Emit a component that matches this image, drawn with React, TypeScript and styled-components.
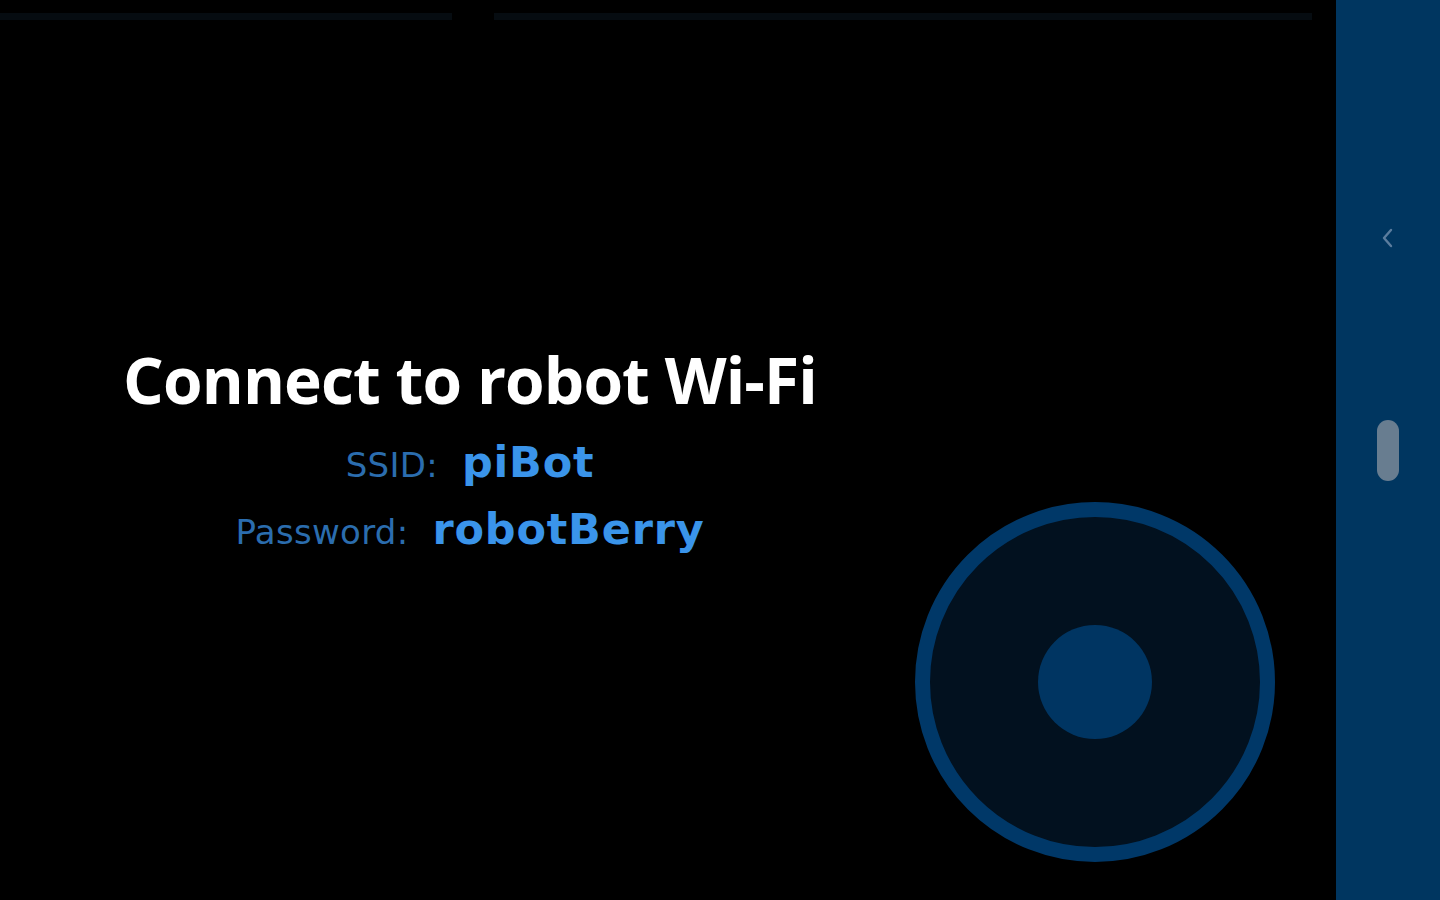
import styled, { createGlobalStyle } from "styled-components";

const GlobalStyle = createGlobalStyle`
  html, body {
    margin: 0;
    padding: 0;
    background: #000;
  }
  body {
    font-family: "Open Sans", "Noto Sans", sans-serif;
  }
`;

const Screen = styled.div`
  display: flex;
  width: 1440px;
  height: 900px;
  overflow: hidden;
  background: #000;
`;

const Main = styled.div`
  flex: 1;
  display: flex;
  flex-direction: column;
`;

const TopBars = styled.div`
  display: flex;
  gap: 42px;
  padding: 13px 24px 0 0;
`;

const TopBar = styled.div<{ $width: number }>`
  width: ${(p) => p.$width}px;
  height: 7px;
  background: #060c11;
`;

const Stage = styled.div`
  flex: 1;
  display: flex;
`;

const Info = styled.div`
  width: 890px;
  padding: 320px 0 0 25px;
  display: flex;
  flex-direction: column;
  align-items: center;
  text-align: center;
`;

const Title = styled.h1`
  margin: 0 0 10px;
  color: #fff;
  font-size: 64px;
  font-weight: 700;
  line-height: 80px;
  letter-spacing: -0.9px;
`;

const Row = styled.div`
  display: flex;
  align-items: baseline;
  gap: 24px;
  line-height: 64px;
  font-family: "DejaVu Sans", "Open Sans", sans-serif;
`;

const Label = styled.span`
  color: #2b6dae;
  font-size: 34px;
  font-weight: 400;
  letter-spacing: 0.3px;
`;

const Value = styled.span`
  color: #3a94ea;
  font-size: 43px;
  font-weight: 700;
  letter-spacing: 0.8px;
`;

const JoystickArea = styled.div`
  flex: 1;
  display: flex;
  justify-content: flex-end;
  align-items: flex-end;
  padding: 0 61px 38px 0;
`;

const JoystickRing = styled.div`
  width: 360px;
  height: 360px;
  box-sizing: border-box;
  border-radius: 50%;
  border: 15px solid #003868;
  background: #02111f;
  display: flex;
  align-items: center;
  justify-content: center;
`;

const Knob = styled.div`
  width: 114px;
  height: 114px;
  border-radius: 50%;
  background: #003562;
`;

const Sidebar = styled.div`
  width: 104px;
  background: #003660;
  display: flex;
  flex-direction: column;
  align-items: center;
  padding-top: 226px;
  box-sizing: border-box;
`;

const Chevron = styled.svg`
  width: 16px;
  height: 24px;
  margin-right: 2px;
`;

const ScrollPill = styled.div`
  width: 22px;
  height: 61px;
  margin-top: 170px;
  border-radius: 11px;
  background: #687d90;
`;

export default function App() {
  return (
    <>
      <GlobalStyle />
      <Screen>
        <Main>
          <TopBars>
            <TopBar $width={452} />
            <TopBar $width={818} />
          </TopBars>
          <Stage>
            <Info>
              <Title>Connect to robot Wi-Fi</Title>
              <Row>
                <Label>SSID:</Label>
                <Value>piBot</Value>
              </Row>
              <Row>
                <Label>Password:</Label>
                <Value>robotBerry</Value>
              </Row>
            </Info>
            <JoystickArea>
              <JoystickRing>
                <Knob />
              </JoystickRing>
            </JoystickArea>
          </Stage>
        </Main>
        <Sidebar>
          <Chevron viewBox="0 0 16 24">
            <path
              d="M12 4 L5 12 L12 20"
              fill="none"
              stroke="#5b7d9e"
              strokeWidth="2.4"
              strokeLinecap="round"
              strokeLinejoin="round"
            />
          </Chevron>
          <ScrollPill />
        </Sidebar>
      </Screen>
    </>
  );
}
